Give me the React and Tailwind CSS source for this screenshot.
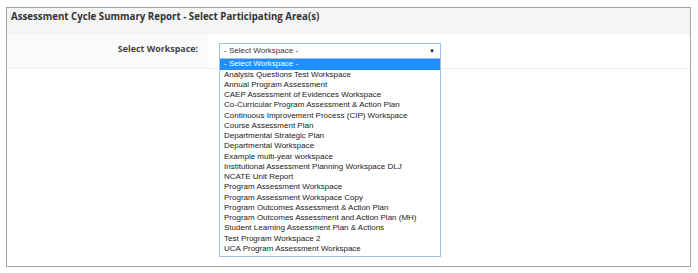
import React from 'react';

const options = [
    'Analysis Questions Test Workspace',
    'Annual Program Assessment',
    'CAEP Assessment of Evidences Workspace',
    'Co-Curricular Program Assessment & Action Plan',
    'Continuous Improvement Process (CIP) Workspace',
    'Course Assessment Plan',
    'Departmental Strategic Plan',
    'Departmental Workspace',
    'Example multi-year workspace',
    'Institutional Assessment Planning Workspace DLJ',
    'NCATE Unit Report',
    'Program Assessment Workspace',
    'Program Assessment Workspace Copy',
    'Program Outcomes Assessment & Action Plan',
    'Program Outcomes Assessment and Action Plan (MH)',
    'Student Learning Assessment Plan & Actions',
    'Test Program Workspace 2',
    'UCA Program Assessment Workspace',
];

const App = () => {
    return (
        <div className="w-[698px] h-[273px] bg-white pt-[7px] pl-[6px] font-['Liberation_Sans',Arial,sans-serif]">
            <div className="w-[685px] h-[260px] border border-[#a3a3a3] bg-white flex flex-col">
                {/* Header */}
                <div className="h-[26px] bg-[#f5f5f5] pt-[2px] pl-[4px] border-b border-[#f0f0f0]">
                    <h1 className="text-[9.7px] font-bold text-[#333] font-['Open_Sans',sans-serif]">
                        Assessment Cycle Summary Report - Select Participating Area(s)
                    </h1>
                </div>

                {/* Row */}
                <div className="flex h-[35px] border-b border-[#f0f0f0]">
                    <div className="w-[201px] bg-[#fafafa] flex justify-end pt-[8px] pr-[10px]">
                        <label className="text-[8.9px] font-bold text-[#444] font-['Open_Sans',sans-serif]">
                            Select Workspace:
                        </label>
                    </div>
                    <div className="relative pl-[11px] pt-[9px]">
                        <div className="w-[222px] h-[16px] border border-[#9ebde6] bg-white flex items-center justify-between pl-[4px] pr-[5px] text-[8px] text-[#333]">
                            <span>- Select Workspace -</span>
                            <span className="text-[6px] text-[#222]">▼</span>
                        </div>

                        {/* Dropdown list */}
                        <div className="absolute left-[11px] top-[24px] w-[222px] border border-[#a9bfdc] bg-white z-10 pb-[2px]">
                            <div className="bg-[#1e90ff] text-white text-[8px] h-[10.5px] leading-[10.5px] pl-[4px]">
                                - Select Workspace -
                            </div>
                            {options.map((o) => (
                                <div key={o} className="text-[8px] h-[10.25px] leading-[10.25px] pl-[4px] text-[#222] whitespace-nowrap">
                                    {o}
                                </div>
                            ))}
                        </div>
                    </div>
                </div>

                <div className="flex-1 bg-white" />
            </div>
        </div>
    );
};

export default App;
